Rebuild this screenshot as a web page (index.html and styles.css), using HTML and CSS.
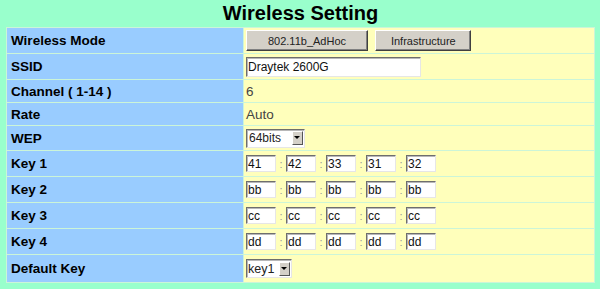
FILE: index.html
```html
<!DOCTYPE html>
<html lang="en">
<head>
  <meta charset="UTF-8">
  <title>Wireless Setting</title>
  <link rel="stylesheet" href="styles.css">
</head>
<body>
  <h1>Wireless Setting</h1>

  <table class="setting-table">
    <tr class="row-mode">
      <td class="label">Wireless Mode</td>
      <td class="value">
        <button class="mode-btn btn-adhoc">802.11b_AdHoc</button>
        <button class="mode-btn btn-infra">Infrastructure</button>
      </td>
    </tr>
    <tr class="row-mode">
      <td class="label">SSID</td>
      <td class="value"><input type="text" class="ssid-input" value="Draytek 2600G"></td>
    </tr>
    <tr>
      <td class="label">Channel ( 1-14 )</td>
      <td class="value text">6</td>
    </tr>
    <tr>
      <td class="label">Rate</td>
      <td class="value text">Auto</td>
    </tr>
    <tr class="row-select">
      <td class="label">WEP</td>
      <td class="value">
        <span class="select-box wep-select"><span class="select-text">64bits</span><span class="select-arrow"></span></span>
      </td>
    </tr>
    <tr class="row-key">
      <td class="label">Key 1</td>
      <td class="value">
        <input class="key-input" value="41"><span class="colon">:</span><input class="key-input" value="42"><span class="colon">:</span><input class="key-input" value="33"><span class="colon">:</span><input class="key-input" value="31"><span class="colon">:</span><input class="key-input" value="32">
      </td>
    </tr>
    <tr class="row-key">
      <td class="label">Key 2</td>
      <td class="value">
        <input class="key-input" value="bb"><span class="colon">:</span><input class="key-input" value="bb"><span class="colon">:</span><input class="key-input" value="bb"><span class="colon">:</span><input class="key-input" value="bb"><span class="colon">:</span><input class="key-input" value="bb">
      </td>
    </tr>
    <tr class="row-key">
      <td class="label">Key 3</td>
      <td class="value">
        <input class="key-input" value="cc"><span class="colon">:</span><input class="key-input" value="cc"><span class="colon">:</span><input class="key-input" value="cc"><span class="colon">:</span><input class="key-input" value="cc"><span class="colon">:</span><input class="key-input" value="cc">
      </td>
    </tr>
    <tr class="row-key">
      <td class="label">Key 4</td>
      <td class="value">
        <input class="key-input" value="dd"><span class="colon">:</span><input class="key-input" value="dd"><span class="colon">:</span><input class="key-input" value="dd"><span class="colon">:</span><input class="key-input" value="dd"><span class="colon">:</span><input class="key-input" value="dd">
      </td>
    </tr>
    <tr class="row-last">
      <td class="label">Default Key</td>
      <td class="value">
        <span class="select-box key-select"><span class="select-text">key1</span><span class="select-arrow"></span></span>
      </td>
    </tr>
  </table>
</body>
</html>
```

FILE: styles.css
```css
body {
  margin: 0;
  padding: 0 5px 0 6px;
  background-color: #99ffcc;
  font-family: "Liberation Sans", Arial, sans-serif;
}

h1 {
  margin: 0;
  height: 27px;
  line-height: 27px;
  font-size: 20px;
  text-align: center;
  color: #000;
}

.setting-table {
  width: 589px;
  border-collapse: separate;
  border-spacing: 1px;
  background-color: #ccf5d8;
}

.setting-table td {
  padding-top: 0;
  padding-bottom: 0;
}

.setting-table tr {
  height: 22px;
}

.setting-table tr.row-mode {
  height: 25px;
}

.setting-table tr.row-select {
  height: 24px;
}

.setting-table tr.row-key {
  height: 25px;
}

.setting-table tr.row-last {
  height: 27px;
}

.label {
  width: 231px;
  padding-left: 4px;
  background-color: #99ccff;
  font-size: 13.5px;
  font-weight: bold;
  color: #000;
}

.value {
  padding-left: 2px;
  background-color: #ffffbb;
  font-size: 12px;
  white-space: nowrap;
}

.value.text {
  font-size: 13.5px;
  color: #444;
}

.mode-btn {
  height: 21px;
  margin: 0 2px 0 0;
  padding: 0;
  background-color: #d4d0c8;
  border: 1px solid #fff;
  border-right-color: #404040;
  border-bottom-color: #404040;
  box-shadow: inset -1px -1px #808080;
  font-family: "Liberation Sans", Arial, sans-serif;
  font-size: 11px;
  color: #222;
}

.btn-adhoc {
  width: 122px;
}

.btn-infra {
  width: 96px;
  margin-left: 2px;
}

.ssid-input,
.key-input {
  box-sizing: border-box;
  padding: 0 1px;
  background-color: #fff;
  border: 1px solid #e6e6e6;
  border-top-color: #6e6e6e;
  border-left-color: #6e6e6e;
  box-shadow: inset 1px 1px #b8b8b8;
  font-family: "Liberation Sans", Arial, sans-serif;
  font-size: 12px;
  color: #111;
  vertical-align: middle;
  outline: none;
}

.ssid-input {
  width: 175px;
  height: 20px;
}

.key-input {
  width: 30px;
  height: 17px;
}

.colon {
  display: inline-block;
  width: 10px;
  text-align: center;
  color: #999;
  font-size: 11px;
  vertical-align: middle;
}

.select-box {
  display: inline-flex;
  align-items: center;
  box-sizing: border-box;
  height: 19px;
  background-color: #fff;
  border: 1px solid #e6e6e6;
  border-top-color: #6e6e6e;
  border-left-color: #6e6e6e;
  box-shadow: inset 1px 1px #b8b8b8;
  vertical-align: middle;
}

.wep-select {
  width: 59px;
}

.key-select {
  width: 46px;
}

.select-text {
  flex: 1;
  padding-left: 2px;
  font-size: 12px;
  color: #222;
}

.key-select .select-text {
  font-size: 12.5px;
  padding-left: 1px;
}

.select-arrow {
  position: relative;
  width: 11px;
  height: 14px;
  margin-right: 1px;
  background-color: #d4d0c8;
  border: 1px solid #fff;
  border-right-color: #555;
  border-bottom-color: #555;
  box-sizing: border-box;
}

.select-arrow::after {
  content: "";
  position: absolute;
  left: 1px;
  top: 4px;
  border-left: 3px solid transparent;
  border-right: 3px solid transparent;
  border-top: 3px solid #000;
}
```
